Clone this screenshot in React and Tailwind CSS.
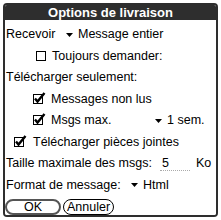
import React from 'react'

const font = { fontFamily: '"Liberation Sans", Arial, sans-serif' }

function Caret({ className = '' }) {
  return (
    <svg width="7" height="4" viewBox="0 0 7 4" className={className}>
      <path d="M0 0 H7 L3.5 4 Z" fill="#000" />
    </svg>
  )
}

function CheckOn({ className = '' }) {
  return (
    <svg width="13" height="12" viewBox="0 0 13 12" className={className}>
      <rect x="0.5" y="2.5" width="9" height="9" fill="none" stroke="#000" />
      <path d="M2 6.5 L4.5 9.5 L11.5 1" fill="none" stroke="#000" strokeWidth="2.4" />
    </svg>
  )
}

function CheckOff({ className = '' }) {
  return (
    <svg width="10" height="10" viewBox="0 0 10 10" className={className}>
      <rect x="0.5" y="0.5" width="9" height="9" fill="none" stroke="#000" />
    </svg>
  )
}

function Row({ children, className = '' }) {
  return <div className={`flex items-center h-[21.5px] whitespace-nowrap ${className}`}>{children}</div>
}

export default function App() {
  return (
    <div className="w-[221px] h-[220px] bg-white p-[3px]" style={font}>
      <div className="w-[215px] h-[214px] rounded-[4px] border-2 border-[#2e2e2e] flex flex-col overflow-hidden">
        <div className="h-[15px] bg-[#2e2e2e] text-white font-bold text-[13px] leading-[15px] text-center">
          Options de livraison
        </div>
        <div className="flex-1 bg-white text-black text-[12.5px] pl-[1px] pt-[4px]">
          <Row>
            <span className="w-[60px]">Recevoir</span>
            <Caret className="mr-[5px]" />
            <span>Message entier</span>
          </Row>
          <Row className="pl-[30px]">
            <CheckOff className="mr-[6px]" />
            <span>Toujours demander:</span>
          </Row>
          <Row>
            <span>Télécharger seulement:</span>
          </Row>
          <Row className="pl-[27px]">
            <CheckOn className="mb-[3px] mr-[5px]" />
            <span>Messages non lus</span>
          </Row>
          <Row className="pl-[27px]">
            <CheckOn className="mb-[3px] mr-[5px]" />
            <span className="w-[104px]">Msgs max.</span>
            <Caret className="mr-[5px]" />
            <span>1 sem.</span>
          </Row>
          <Row className="pl-[8px]">
            <CheckOn className="mb-[3px] mr-[6px]" />
            <span>Télécharger pièces jointes</span>
          </Row>
          <Row>
            <span className="w-[154px]">Taille maximale des msgs:</span>
            <span className="w-[30px] pl-[2px] leading-[14px] border-b border-dotted border-[#aaa]">5</span>
            <span className="ml-[6px]">Ko</span>
          </Row>
          <Row>
            <span className="w-[125px]">Format de message:</span>
            <Caret className="mr-[5px]" />
            <span>Html</span>
          </Row>
          <div className="flex items-center gap-[2px] mt-[3px] -ml-[1px]">
            <div className="w-[56px] h-[16px] rounded-[8px] border-2 border-[#555] flex items-center justify-center leading-none">
              OK
            </div>
            <div className="w-[51px] h-[16px] rounded-[8px] border border-black flex items-center justify-center leading-none">
              Annuler
            </div>
          </div>
        </div>
      </div>
    </div>
  )
}
